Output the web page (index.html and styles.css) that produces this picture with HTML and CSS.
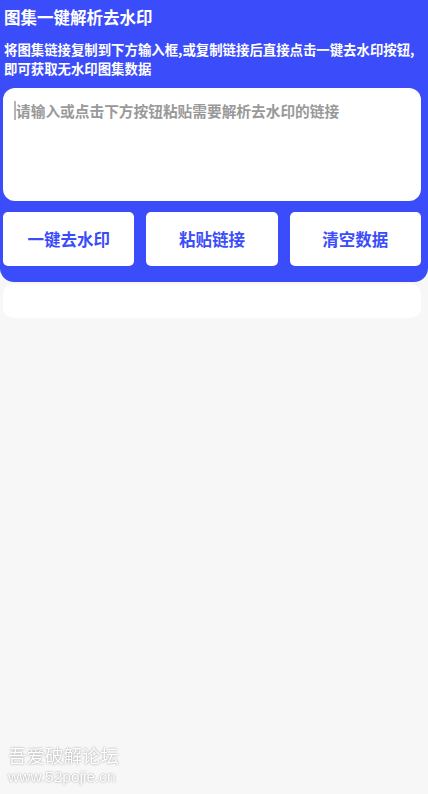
FILE: index.html
```html
<!DOCTYPE html>
<html lang="zh-CN">
<head>
<meta charset="UTF-8">
<meta name="viewport" content="width=device-width, initial-scale=1.0">
<title>图集一键解析去水印</title>
<link rel="stylesheet" href="styles.css">
</head>
<body>

<div class="header">
    <h1 class="title">图集一键解析去水印</h1>
    <p class="desc">将图集链接复制到下方输入框,或复制链接后直接点击一键去水印按钮,<br>即可获取无水印图集数据</p>
    <div class="input-box">
        <span class="caret"></span><span class="placeholder">请输入或点击下方按钮粘贴需要解析去水印的链接</span>
    </div>
    <div class="actions">
        <button type="button" class="btn">一键去水印</button>
        <button type="button" class="btn">粘贴链接</button>
        <button type="button" class="btn">清空数据</button>
    </div>
</div>

<div class="result"></div>

<div class="watermark">
    <div class="wm-name">吾爱破解论坛</div>
    <div class="wm-url">www.52pojie.cn</div>
</div>

</body>
</html>
```

FILE: styles.css
```css
body {
    margin: 0;
    padding: 0;
    background-color: #f7f7f7;
    font-family: "Noto Sans CJK SC", "Noto Sans", sans-serif;
    height: 794px;
    overflow: hidden;
}

.header {
    background-color: #3b4dfb;
    padding: 5px 7px 16px 3px;
    border-radius: 0 0 14px 14px;
}

.title {
    margin: 0;
    padding-left: 1px;
    color: #fff;
    font-size: 16.5px;
    font-weight: bold;
    line-height: 24px;
}

.desc {
    margin: 11px 0 0;
    padding-left: 1px;
    color: #fff;
    font-size: 13.4px;
    font-weight: bold;
    line-height: 19px;
    white-space: nowrap;
}

.input-box {
    margin-top: 10px;
    height: 113px;
    background-color: #fff;
    border-radius: 12px;
    padding: 12px 11px;
    box-sizing: border-box;
    display: flex;
    align-items: flex-start;
}

.caret {
    width: 2px;
    height: 19px;
    margin-top: 1px;
    background-color: #b5b5b5;
}

.placeholder {
    color: #999;
    font-size: 14.7px;
    font-weight: bold;
    line-height: 21px;
}

.actions {
    margin-top: 11px;
    display: flex;
    gap: 12px;
}

.btn {
    flex: 1;
    height: 54px;
    border: none;
    border-radius: 5px;
    background-color: #fff;
    color: #3b4dfb;
    font-family: inherit;
    font-size: 16.5px;
    font-weight: bold;
    padding: 0;
}

.result {
    margin: 2px 7px 0 3px;
    height: 34px;
    background-color: #fff;
    border-radius: 10px;
}

.watermark {
    position: fixed;
    left: 8px;
    bottom: 10px;
    color: #fff;
    text-shadow: 0 0 2px rgba(0, 0, 0, 0.45);
}

.wm-name {
    font-size: 18.5px;
    line-height: 20px;
}

.wm-url {
    margin-top: 4px;
    font-family: "Liberation Sans", Arial, sans-serif;
    font-size: 15.5px;
    line-height: 15px;
}
```
